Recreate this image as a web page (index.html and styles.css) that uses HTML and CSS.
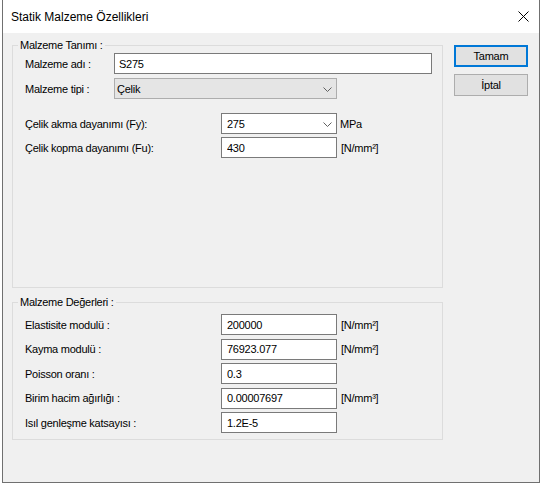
FILE: index.html
```html
<!DOCTYPE html>
<html lang="tr">
<head>
  <meta charset="UTF-8" />
  <title>Statik Malzeme Özellikleri</title>
  <link rel="stylesheet" href="styles.css">
</head>
<body>
  <div class="window">
    <div class="titlebar">
      <span class="title">Statik Malzeme Özellikleri</span>
      <span class="close" aria-label="Kapat">
        <svg width="11" height="11" viewBox="0 0 11 11">
          <path d="M0.5 0.5 L10.5 10.5 M10.5 0.5 L0.5 10.5" stroke="#000" stroke-width="1" fill="none"/>
        </svg>
      </span>
    </div>

    <div class="main">
      <div class="groups">
        <fieldset class="group group-def">
          <legend>Malzeme Tanımı :</legend>
          <div class="rows">
            <div class="row wide">
              <label for="mat-name">Malzeme adı :</label>
              <input type="text" id="mat-name" class="field name-field" value="S275" />
            </div>
            <div class="row wide row-type">
              <label>Malzeme tipi :</label>
              <div class="combo combo-type">
                <span>Çelik</span>
                <svg width="9" height="5" viewBox="0 0 9 5"><polyline points="0.5,0.5 4.5,4.5 8.5,0.5" stroke="#606060" fill="none"/></svg>
              </div>
            </div>

            <div class="row narrow row-fy">
              <label>Çelik akma dayanımı (Fy):</label>
              <div class="combo">
                <span>275</span>
                <svg width="9" height="5" viewBox="0 0 9 5"><polyline points="0.5,0.5 4.5,4.5 8.5,0.5" stroke="#606060" fill="none"/></svg>
              </div>
              <span class="unit unit-mpa">MPa</span>
            </div>
            <div class="row narrow row-fu">
              <label for="fu">Çelik kopma dayanımı (Fu):</label>
              <input type="text" id="fu" class="field" value="430" />
              <span class="unit">[N/mm²]</span>
            </div>
          </div>
        </fieldset>

        <fieldset class="group group-values">
          <legend>Malzeme Değerleri :</legend>
          <div class="rows values">
            <div class="row narrow">
              <label for="e">Elastisite modulü :</label>
              <input type="text" id="e" class="field" value="200000" />
              <span class="unit">[N/mm²]</span>
            </div>
            <div class="row narrow">
              <label for="g">Kayma modulü :</label>
              <input type="text" id="g" class="field" value="76923.077" />
              <span class="unit">[N/mm²]</span>
            </div>
            <div class="row narrow">
              <label for="nu">Poisson oranı :</label>
              <input type="text" id="nu" class="field" value="0.3" />
            </div>
            <div class="row narrow">
              <label for="w">Birim hacim ağırlığı :</label>
              <input type="text" id="w" class="field" value="0.00007697" />
              <span class="unit">[N/mm³]</span>
            </div>
            <div class="row narrow">
              <label for="alpha">Isıl genleşme katsayısı :</label>
              <input type="text" id="alpha" class="field" value="1.2E-5" />
            </div>
          </div>
        </fieldset>
      </div>

      <div class="actions">
        <button type="button" class="btn btn-default">Tamam</button>
        <button type="button" class="btn">İptal</button>
      </div>
    </div>
  </div>
</body>
</html>
```

FILE: styles.css
```css
/* Reset & base */
* {
  box-sizing: border-box;
  margin: 0;
  padding: 0;
}

body {
  background: #fff;
  font-family: "Liberation Sans", Arial, sans-serif;
  font-size: 11px;
  letter-spacing: -0.25px;
  color: #000;
}

.window {
  margin-left: 2px;
  width: 538px;
  height: 483px;
  border: 1px solid #707070;
  border-top: none;
  background: #f0f0f0;
  display: flex;
  flex-direction: column;
}

/* Title bar */
.titlebar {
  height: 33px;
  background: #fff;
  display: flex;
  align-items: center;
  justify-content: space-between;
  padding: 0 10px 0 8px;
  font-size: 12px;
  letter-spacing: 0;
}

.close {
  display: flex;
}

/* Body */
.main {
  display: flex;
  gap: 11px;
  padding: 6px 0 0 9px;
}

.groups {
  width: 431px;
  display: flex;
  flex-direction: column;
  gap: 8px;
}

.group {
  border: 1px solid #dcdcdc;
  padding: 0 0 0 5px;
}

.group legend {
  padding: 0 2px;
  line-height: 13px;
}

.group-def {
  height: 249px;
}

.rows {
  padding: 1px 0 0 7px;
}

.row {
  display: grid;
  align-items: center;
  height: 21px;
}

.row.wide {
  grid-template-columns: 89px 318px;
}

.row.narrow {
  grid-template-columns: 196px 116px auto;
}

.row-type {
  margin-top: 4px;
}

.row-fy {
  margin-top: 14px;
}

.row-fu {
  margin-top: 3px;
}

.values {
  padding: 5px 0 6px 7px;
  display: flex;
  flex-direction: column;
  gap: 3.5px;
}

label {
  white-space: nowrap;
}

/* Fields */
.field {
  height: 21px;
  width: 100%;
  border: 1px solid #7a7a7a;
  background: #fff;
  font: inherit;
  letter-spacing: inherit;
  color: #000;
  padding: 0 4px 0 5px;
  outline: none;
}

.name-field {
  padding-left: 4px;
}

.combo {
  height: 21px;
  display: flex;
  align-items: center;
  justify-content: space-between;
  border: 1px solid #7a7a7a;
  background: #fff;
  padding: 0 4px 0 5px;
}

.combo svg {
  margin-top: 1px;
}

.combo-type {
  width: 223px;
  background: #e5e5e5;
  border-color: #adadad;
  padding-left: 2px;
}

.unit {
  padding-left: 4px;
}

.unit-mpa {
  padding-left: 3px;
}

/* Buttons */
.actions {
  display: flex;
  flex-direction: column;
  gap: 7px;
  padding-top: 6px;
  width: 74px;
}

.btn {
  height: 22px;
  border: 1px solid #adadad;
  background: #e1e1e1;
  font: inherit;
  letter-spacing: inherit;
  color: #000;
}

.btn-default {
  border: 2px solid #0078d7;
}
```
